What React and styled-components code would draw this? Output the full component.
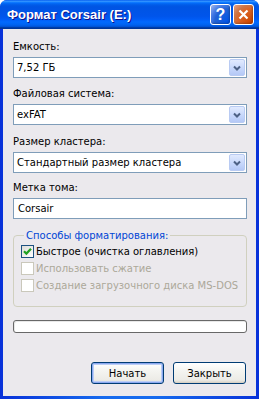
import React from 'react';
import styled, { createGlobalStyle } from 'styled-components';

const GlobalStyle = createGlobalStyle`
  html, body {
    margin: 0;
    padding: 0;
    background: #ffffff;
  }
  body {
    font-family: "DejaVu Sans", "Liberation Sans", sans-serif;
    font-size: 10px;
  }
`;

const Window = styled.div`
  width: 259px;
  height: 399px;
  display: flex;
  flex-direction: column;
  box-sizing: border-box;
  background: #0a3fd6;
  border-radius: 7px 7px 0 0;
  overflow: hidden;
`;

const TitleBar = styled.div`
  height: 29px;
  flex: none;
  display: flex;
  align-items: center;
  padding: 0 5px 0 7px;
  box-sizing: border-box;
  background: linear-gradient(to bottom,
    #0058ee 0%, #3593ff 4%, #288eff 6%, #127dff 8%, #036ffc 10%,
    #0262ee 14%, #0057e5 20%, #0054e3 24%, #0055eb 56%, #005bf5 66%,
    #026afe 76%, #0062ef 86%, #0052d6 92%, #0040ab 94%, #003092 100%);
`;

const Title = styled.div`
  flex: 1;
  color: #ffffff;
  font-family: "Liberation Sans", sans-serif;
  font-weight: bold;
  font-size: 13px;
  text-shadow: 1px 1px 0 #0f1089;
  white-space: nowrap;
`;

const CaptionButton = styled.div`
  width: 21px;
  height: 21px;
  margin-left: 2px;
  box-sizing: border-box;
  border: 1px solid #ffffff;
  border-radius: 3px;
  display: flex;
  align-items: center;
  justify-content: center;
  color: #ffffff;
  font-family: "Liberation Sans", sans-serif;
  font-weight: bold;
  font-size: 16px;
  background: ${p => p.$close
    ? 'radial-gradient(circle at 90% 90%, #cc4600 0%, #dc6527 55%, #cd7546 70%, #e8a287 100%)'
    : 'radial-gradient(circle at 90% 90%, #0054e9 0%, #2263d5 55%, #4479e4 70%, #a3bbec 100%)'};
  box-shadow: inset -1px -1px 2px rgba(0, 0, 0, 0.25);
`;

const Frame = styled.div`
  flex: 1;
  display: flex;
  min-height: 0;
  padding: 0 3px 3px 3px;
  background: linear-gradient(to right, #0831d9, #166aee 40%, #166aee 60%, #0831d9);
`;

const Body = styled.div`
  flex: 1;
  min-width: 0;
  display: flex;
  flex-direction: column;
  background: #ebe9ed;
  padding: 11px 9px 0 10px;
  color: #000000;
`;

const Field = styled.div`
  display: flex;
  flex-direction: column;
  margin-bottom: ${p => p.$gap || 9}px;
`;

const Label = styled.div`
  height: 13px;
  line-height: 13px;
  margin-bottom: 4px;
  white-space: nowrap;
`;

const Combo = styled.div`
  height: 21px;
  box-sizing: border-box;
  border: 1px solid #7f9db9;
  background: #ffffff;
  display: flex;
  align-items: center;
  padding: 1px;
`;

const ComboText = styled.div`
  flex: 1;
  padding-left: 2px;
  white-space: nowrap;
  overflow: hidden;
`;

const ArrowButton = styled.div`
  width: 16px;
  height: 17px;
  box-sizing: border-box;
  border: 1px solid #b9cbf3;
  border-radius: 2px;
  background: linear-gradient(to bottom, #e1eafe 0%, #c5d6fb 60%, #b4c8f6 100%);
  display: flex;
  align-items: center;
  justify-content: center;
`;

const TextInput = styled.div`
  height: 21px;
  box-sizing: border-box;
  border: 1px solid #7f9db9;
  background: #ffffff;
  display: flex;
  align-items: center;
  padding-left: 4px;
`;

const Group = styled.fieldset`
  margin: 0;
  padding: 3px 7px 14px 7px;
  border: 1px solid #d0d0bf;
  border-radius: 4px;
  display: flex;
  flex-direction: column;
  gap: 4px;
  min-width: 0;
`;

const Legend = styled.legend`
  color: #0046d5;
  padding: 0 2px;
  margin-left: 3px;
  line-height: 13px;
`;

const CheckRow = styled.div`
  display: flex;
  align-items: center;
  height: 13px;
  color: ${p => (p.$disabled ? '#aca899' : '#000000')};
  white-space: nowrap;
`;

const CheckBox = styled.div`
  width: 13px;
  height: 13px;
  flex: none;
  box-sizing: border-box;
  margin-right: 2px;
  border: 1px solid ${p => (p.$disabled ? '#cac8bb' : '#1c5180')};
  background: ${p => (p.$disabled
    ? '#ffffff'
    : 'linear-gradient(135deg, #dcdcd7 0%, #ffffff 100%)')};
  display: flex;
  align-items: center;
  justify-content: center;
`;

const Progress = styled.div`
  height: 13px;
  margin-top: 13px;
  box-sizing: border-box;
  border: 1px solid #686868;
  border-radius: 3px;
  background: #ffffff;
  box-shadow: inset 1px 1px 0 #e8e8e8;
`;

const ButtonRow = styled.div`
  display: flex;
  justify-content: flex-end;
  gap: 9px;
  margin-top: 29px;
  padding-right: 1px;
`;

const Button = styled.div`
  width: 73px;
  height: 22px;
  box-sizing: border-box;
  border: 1px solid #003c74;
  border-radius: 3px;
  display: flex;
  align-items: center;
  justify-content: center;
  background: linear-gradient(to bottom, #ffffff 0%, #f4f4f0 40%, #ecebe6 85%, #d6d0c5 100%);
  box-shadow: ${p => (p.$default
    ? 'inset 0 0 0 1px #8aa8f0, inset 0 0 0 2px #bccef5'
    : 'inset 0 -1px 0 #d8d2c6')};
`;

const Chevron = () => (
  <svg width="8" height="6" viewBox="0 0 8 6">
    <path d="M1 1.5 L4 4.5 L7 1.5" stroke="#4d6185" strokeWidth="2" fill="none" />
  </svg>
);

const CloseIcon = () => (
  <svg width="11" height="11" viewBox="0 0 11 11">
    <path d="M1.5 1.5 L9.5 9.5 M9.5 1.5 L1.5 9.5" stroke="#ffffff" strokeWidth="2.2" />
  </svg>
);

const Check = () => (
  <svg width="9" height="9" viewBox="0 0 9 9">
    <path d="M1 4.2 L3.4 6.6 L8 1.8" stroke="#21a121" strokeWidth="2.2" fill="none" />
  </svg>
);

const combos = [
  { label: 'Емкость:', value: '7,52 ГБ', gap: 9 },
  { label: 'Файловая система:', value: 'exFAT', gap: 10 },
  { label: 'Размер кластера:', value: 'Стандартный размер кластера', gap: 8 },
];

const options = [
  { text: 'Быстрое (очистка оглавления)', checked: true },
  { text: 'Использовать сжатие', disabled: true },
  { text: 'Создание загрузочного диска MS-DOS', disabled: true },
];

export default function App() {
  return (
    <>
      <GlobalStyle />
      <Window>
        <TitleBar>
          <Title>Формат Corsair (E:)</Title>
          <CaptionButton>?</CaptionButton>
          <CaptionButton $close>
            <CloseIcon />
          </CaptionButton>
        </TitleBar>
        <Frame>
          <Body>
            {combos.map(c => (
              <Field key={c.label} $gap={c.gap}>
                <Label>{c.label}</Label>
                <Combo>
                  <ComboText>{c.value}</ComboText>
                  <ArrowButton>
                    <Chevron />
                  </ArrowButton>
                </Combo>
              </Field>
            ))}
            <Field $gap={10}>
              <Label>Метка тома:</Label>
              <TextInput>Corsair</TextInput>
            </Field>
            <Group>
              <Legend>Способы форматирования:</Legend>
              {options.map(o => (
                <CheckRow key={o.text} $disabled={o.disabled}>
                  <CheckBox $disabled={o.disabled}>{o.checked && <Check />}</CheckBox>
                  {o.text}
                </CheckRow>
              ))}
            </Group>
            <Progress />
            <ButtonRow>
              <Button $default>Начать</Button>
              <Button>Закрыть</Button>
            </ButtonRow>
          </Body>
        </Frame>
      </Window>
    </>
  );
}
